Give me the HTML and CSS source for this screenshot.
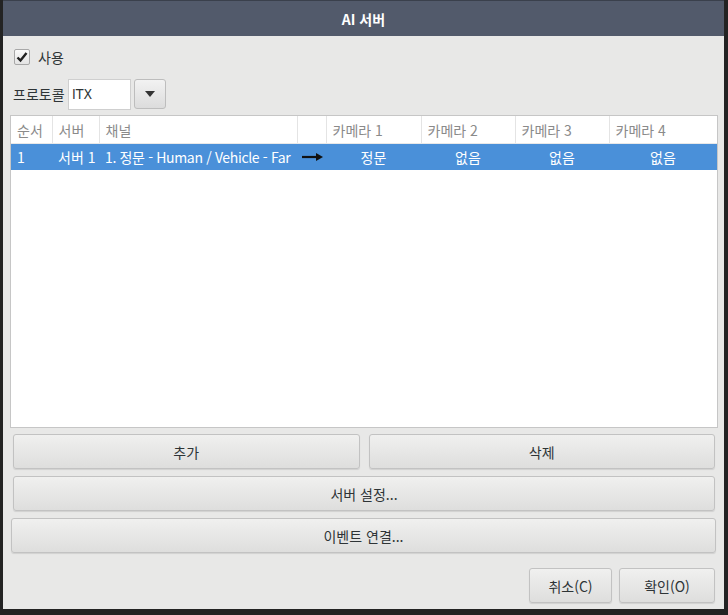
FILE: index.html
```html
<!DOCTYPE html>
<html lang="ko">
<head>
    <meta charset="UTF-8">
    <title>AI 서버</title>
    <link rel="stylesheet" href="styles.css">
</head>
<body>
    <div class="dialog">
        <div class="titlebar">AI 서버</div>
        <div class="content">
            <div class="use-row">
                <span class="checkbox">
                    <svg width="12" height="12" viewBox="0 0 12 12"><path d="M1.5 6.5 L4.5 9.5 L10.5 2" fill="none" stroke="#222" stroke-width="2.4"/></svg>
                </span>
                <span>사용</span>
            </div>
            <div class="proto-row">
                <span class="proto-label">프로토콜</span>
                <div class="combo-text">ITX</div>
                <button class="combo-btn">
                    <svg width="10" height="6" viewBox="0 0 10 6"><path d="M0 0 L10 0 L5 6 Z" fill="#333"/></svg>
                </button>
            </div>
            <div class="table-box">
                <table class="grid">
                    <colgroup>
                        <col style="width:41px">
                        <col style="width:47px">
                        <col style="width:198px">
                        <col style="width:29px">
                        <col style="width:95px">
                        <col style="width:94px">
                        <col style="width:94px">
                        <col>
                    </colgroup>
                    <thead>
                        <tr>
                            <th>순서</th>
                            <th>서버</th>
                            <th>채널</th>
                            <th></th>
                            <th>카메라 1</th>
                            <th>카메라 2</th>
                            <th>카메라 3</th>
                            <th>카메라 4</th>
                        </tr>
                    </thead>
                    <tbody>
                        <tr class="selected">
                            <td>1</td>
                            <td>서버 1</td>
                            <td class="clip">1. 정문 - Human / Vehicle - Far</td>
                            <td class="arrow">
                                <svg width="22" height="10" viewBox="0 0 22 10"><path d="M0 5 H16" stroke="#111" stroke-width="2.2"/><path d="M14 1 L21 5 L14 9 Z" fill="#111"/></svg>
                            </td>
                            <td class="center">정문</td>
                            <td class="center">없음</td>
                            <td class="center">없음</td>
                            <td class="center">없음</td>
                        </tr>
                    </tbody>
                </table>
            </div>
            <div class="btn-pair">
                <button class="btn">추가</button>
                <button class="btn">삭제</button>
            </div>
            <button class="btn wide">서버 설정...</button>
            <button class="btn wide event">이벤트 연결...</button>
            <div class="footer">
                <button class="btn small">취소(C)</button>
                <button class="btn small ok">확인(O)</button>
            </div>
        </div>
    </div>
</body>
</html>
```

FILE: styles.css
```css
body {
    margin: 0;
    background-color: #232323;
    font-family: "Noto Sans CJK KR", "Noto Sans", sans-serif;
    font-size: 14px;
    color: #2e3436;
}
.dialog {
    margin-left: 3px;
    width: 721px;
    height: 609px;
    background-color: #e8e8e7;
    display: flex;
    flex-direction: column;
}
.titlebar {
    height: 36px;
    line-height: 36px;
    background-color: #525a6b;
    color: #fff;
    font-weight: bold;
    text-align: center;
    font-size: 14px;
    border-top: 1px solid #3a404c;
    box-sizing: border-box;
}
.content {
    padding: 0 6px 0 7px;
    display: flex;
    flex-direction: column;
}
.use-row {
    display: flex;
    align-items: center;
    gap: 8px;
    height: 42px;
    padding-left: 4px;
}
.checkbox {
    width: 14px;
    height: 14px;
    border: 1px solid #a8a8a8;
    border-radius: 2px;
    background: linear-gradient(#fafafa, #e4e4e4);
    display: flex;
    align-items: center;
    justify-content: center;
}
.proto-row {
    display: flex;
    align-items: center;
    height: 32px;
    padding-left: 3px;
}
.proto-label {
    width: 55px;
}
.combo-text {
    width: 58px;
    height: 29px;
    line-height: 29px;
    padding-left: 3px;
    background-color: #fff;
    border: 1px solid #cfcfcf;
    font-family: "DejaVu Sans", sans-serif;
    font-stretch: condensed;
    font-size: 14px;
}
.combo-btn {
    margin-left: 3px;
    width: 32px;
    height: 30px;
    border: 1px solid #bdbdbd;
    border-radius: 3px;
    background: linear-gradient(#f2f2f2, #dcdcdc);
    display: flex;
    align-items: center;
    justify-content: center;
    padding: 0;
}
.table-box {
    margin-top: 5px;
    height: 311px;
    background-color: #fff;
    border: 1px solid #c6c6c6;
}
.grid {
    width: 100%;
    border-collapse: collapse;
    table-layout: fixed;
}
.grid th {
    height: 27px;
    padding: 0 6px;
    text-align: left;
    font-weight: normal;
    color: #8a8a8a;
    border-right: 1px solid #e4e4e4;
    border-bottom: 1px solid #e8e8e8;
}
.grid th:last-child {
    border-right: none;
}
.grid td {
    height: 26px;
    padding: 0 6px;
    white-space: nowrap;
    overflow: hidden;
}
.grid .selected {
    background-color: #4a90d9;
    color: #fff;
}
.grid .clip {
    padding-right: 2px;
    letter-spacing: -0.35px;
}
.grid .arrow {
    padding: 0 2px 0 5px;
}
.grid .arrow svg {
    display: block;
}
.grid .center {
    text-align: center;
}
.btn {
    height: 35px;
    border: 1px solid #c2c2c2;
    border-radius: 3px;
    background: linear-gradient(#f0f0ef, #dededd);
    font-family: "Noto Sans CJK KR", "Noto Sans", sans-serif;
    font-size: 14px;
    color: #2e3436;
    box-shadow: 0 1px 1px rgba(0,0,0,0.1);
}
.btn-pair {
    margin-top: 6px;
    padding: 0 3px;
    display: grid;
    grid-template-columns: 1fr 1fr;
    gap: 9px;
}
.wide {
    margin: 7px 3px 0 3px;
}
.event {
    margin: 7px 2px 0 1px;
}
.footer {
    margin-top: 15px;
    display: flex;
    justify-content: flex-end;
    gap: 7px;
    padding-right: 3px;
}
.small {
    width: 83px;
}
.ok {
    width: 96px;
}
```
